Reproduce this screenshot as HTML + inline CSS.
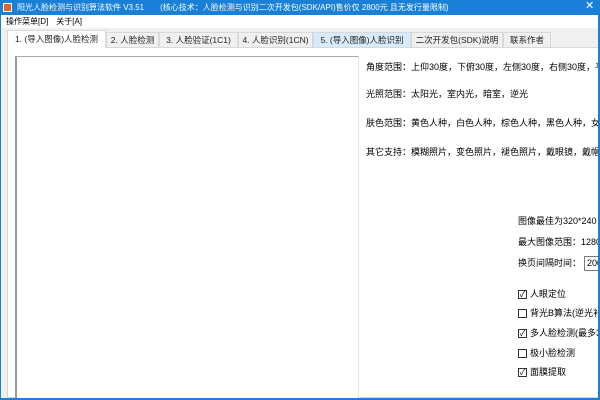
<!DOCTYPE html>
<html><head><meta charset="utf-8"><style>
*{margin:0;padding:0;box-sizing:border-box}
html,body{width:600px;height:400px;overflow:hidden}
body{background:#fff;font-family:"Liberation Sans","Noto Sans CJK SC",sans-serif;font-size:9px;color:#000;position:relative}
.a{position:absolute;white-space:nowrap;line-height:11px}
#title{left:0;top:0;width:600px;height:15px;background:#1a7fd6;color:#fff}
.tab{position:absolute;top:32px;height:15px;background:#f0f0f0;border:1px solid #d9d9d9;border-bottom:none;text-align:center;line-height:14px;font-size:8.5px;color:#222;overflow:hidden}
.cb{position:absolute;width:9px;height:9px;border:1px solid #333;background:#fff;font-size:8px;line-height:7px;text-align:center}
.clip{position:absolute;left:0;top:0;width:598px;height:400px;overflow:hidden}
</style></head><body>
<div class="clip">
<div class="a" id="title"></div>
<div class="a" style="left:3px;top:3px;width:9px;height:9px;background:#e0652a;border:1px solid #fff"></div>
<div class="a" style="left:17px;top:2px;color:#fff;font-size:8px">阳光人脸检测与识别算法软件 V3.51　　(核心技术：人脸检测与识别二次开发包(SDK/API)售价仅 2800元 且无发行量限制)</div>
<div class="a" style="left:585px;top:1px;color:#fff;font-size:11px">✕</div>
<div class="a" style="left:0;top:15px;width:600px;height:13px;background:#fff"></div>
<div class="a" style="left:6px;top:16px;font-size:8px">操作菜单[D]　关于[A]</div>
<div class="a" style="left:0;top:28px;width:600px;height:372px;background:#f0f0f0"></div>
<div class="a" style="left:7px;top:47px;width:593px;height:351px;background:#fff;border:1px solid #d9d9d9"></div>
<div class="tab" style="left:106px;width:53px">2. 人脸检测</div>
<div class="tab" style="left:159px;width:79px">3. 人脸验证(1C1)</div>
<div class="tab" style="left:238px;width:75px">4. 人脸识别(1CN)</div>
<div class="tab" style="left:313px;width:98px;background:#d9ebf9">5. (导入图像)人脸识别</div>
<div class="tab" style="left:411px;width:92px">二次开发包(SDK)说明</div>
<div class="tab" style="left:503px;width:48px">联系作者</div>
<div class="tab" style="left:7px;top:30px;height:18px;width:99px;background:#fff;line-height:17px">1. (导入图像)人脸检测</div>
<div class="a" style="left:15px;top:56px;width:344px;height:343px;border-left:2px solid #999;border-top:1px solid #aaa;border-right:1px solid #e6e6e6;background:#fff"></div>
<div class="a" style="left:366px;top:62px">角度范围：上仰30度，下俯30度，左侧30度，右侧30度，平面旋转</div>
<div class="a" style="left:366px;top:89px">光照范围：太阳光，室内光，暗室，逆光</div>
<div class="a" style="left:366px;top:118px">肤色范围：黄色人种，白色人种，棕色人种，黑色人种，女士化妆</div>
<div class="a" style="left:366px;top:147px">其它支持：模糊照片，变色照片，褪色照片，戴眼镜，戴帽</div>
<div class="a" style="left:518px;top:216px">图像最佳为320*240 (</div>
<div class="a" style="left:518px;top:237px">最大图像范围：1280*1</div>
<div class="a" style="left:518px;top:258px">换页间隔时间：</div>
<div class="a" style="left:584px;top:256px;width:20px;height:15px;border:1px solid #7a7a7a;padding:1px 2px;line-height:11px">200</div>
<div class="cb" style="left:518px;top:290px">✓</div><div class="a" style="left:530px;top:289px">人眼定位</div>
<div class="cb" style="left:518px;top:309px"></div><div class="a" style="left:530px;top:308px">背光B算法(逆光补偿</div>
<div class="cb" style="left:518px;top:329px">✓</div><div class="a" style="left:530px;top:328px">多人脸检测(最多32</div>
<div class="cb" style="left:518px;top:349px"></div><div class="a" style="left:530px;top:348px">极小脸检测</div>
<div class="cb" style="left:518px;top:368px">✓</div><div class="a" style="left:530px;top:367px">面膜提取</div>
</div>
<div class="a" style="left:0;top:0;width:1px;height:400px;background:#1a7fd6"></div>
<div class="a" style="left:598px;top:0;width:2px;height:400px;background:#1a7fd6"></div>
<div class="a" style="left:0;top:398px;width:600px;height:2px;background:#1a7fd6"></div>
</body></html>
